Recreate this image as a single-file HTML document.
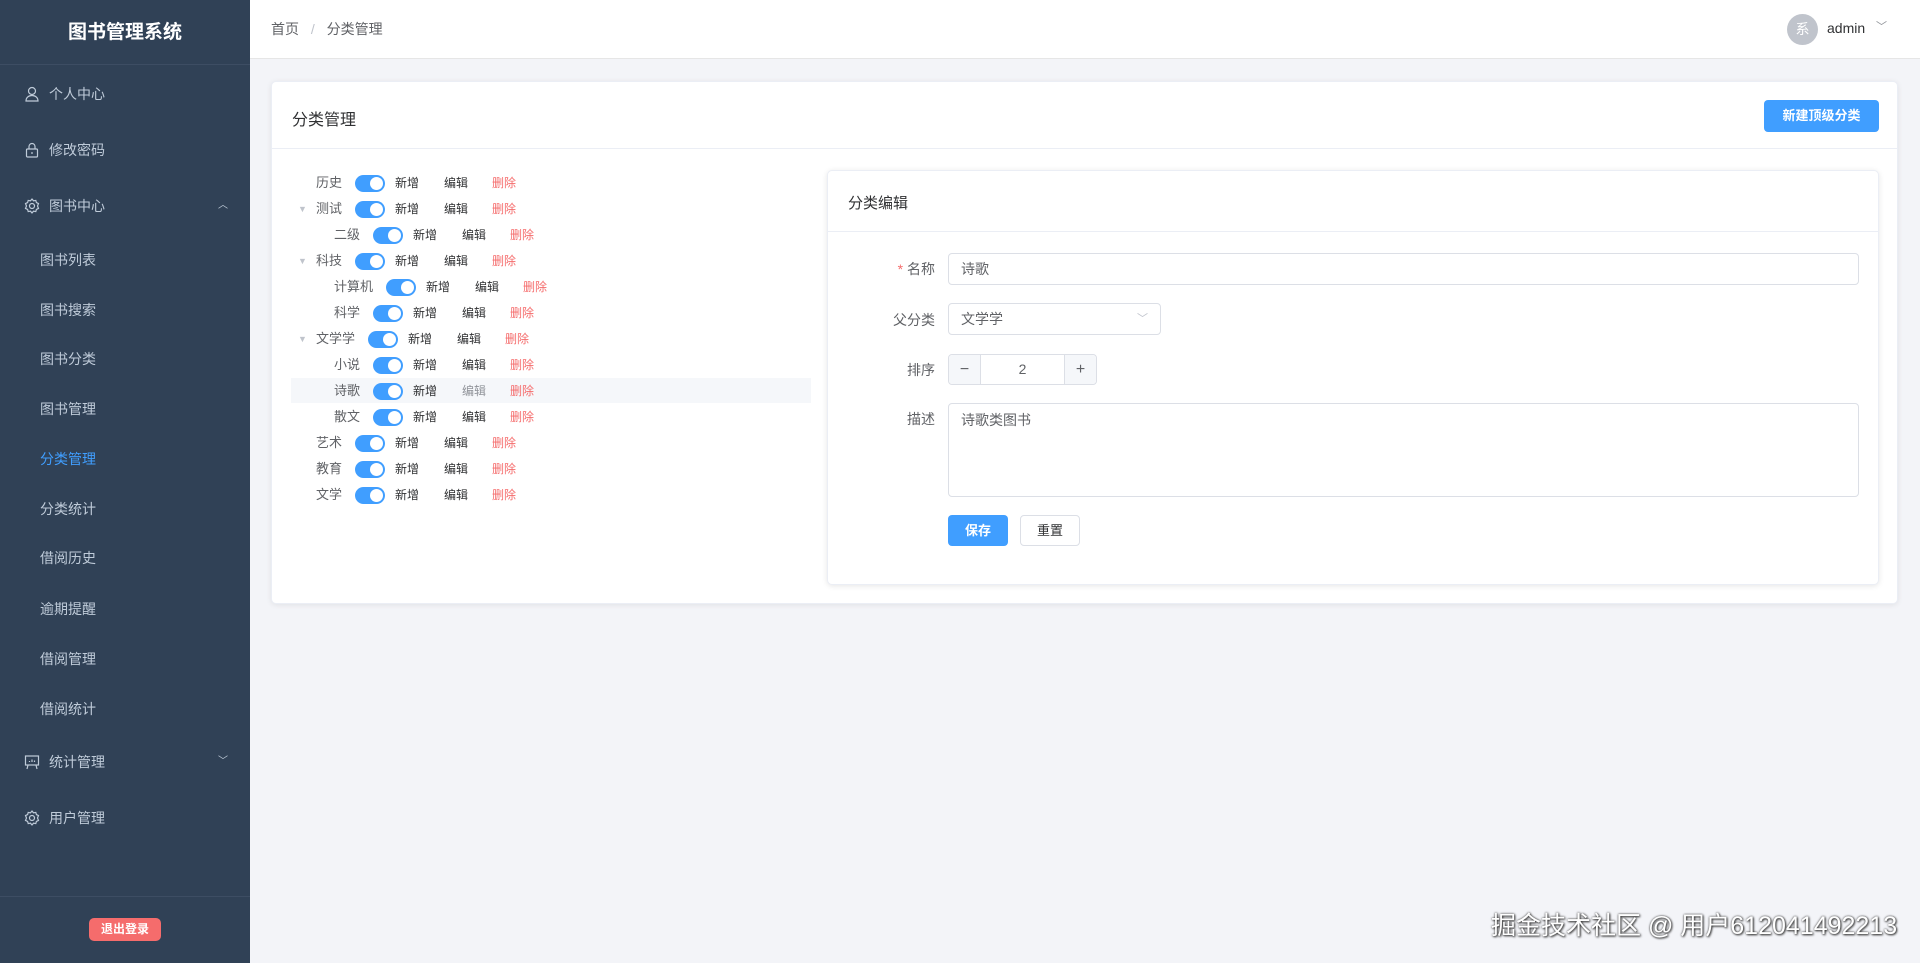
<!DOCTYPE html>
<html><head><meta charset="utf-8"><style>
*{box-sizing:border-box;margin:0;padding:0}
body{width:1920px;height:963px;overflow:hidden;background:#f3f4f8;font-family:"Liberation Sans","Noto Sans CJK SC",sans-serif;font-size:14px;color:#303133;position:relative}
.side{position:absolute;left:0;top:0;width:250px;height:963px;background:#304156;color:#bfcbd9}
.logo{height:65px;border-bottom:1px solid #3d4d63;text-align:center;line-height:66px;color:#fff;font-weight:bold;font-size:19px}
.mi{position:absolute;left:0;width:250px;height:40px;line-height:40px;font-size:14px}
.mi .ic{position:absolute;left:24px;top:12px;width:16px;height:16px}
.mi .t{position:absolute;left:49px}
.mi .ar{position:absolute;left:218px;top:0;font-size:10px}
.si{position:absolute;left:40px;font-size:14px;line-height:20px}
.logout{position:absolute;left:89px;top:918px;width:72px;height:23px;background:#f56c6c;color:#fff;border-radius:5px;text-align:center;line-height:23px;font-size:12px;font-weight:bold}
.hdr{position:absolute;left:250px;top:0;width:1670px;height:59px;background:#fff;border-bottom:1px solid #e6e6e6}
.card{position:absolute;background:#fff;border-radius:5px;box-shadow:0 1px 6px rgba(0,0,0,.08);border:1px solid #ebeef5}
.row{position:absolute;height:26px;line-height:26px;font-size:13px;color:#606266;white-space:nowrap}
.sw{display:inline-block;position:absolute;width:30px;height:17px;background:#409eff;border-radius:9px;top:5px}
.sw:after{content:"";position:absolute;right:2px;top:2px;width:13px;height:13px;border-radius:50%;background:#fff}
.a{position:absolute;font-size:12px;color:#303133}
.d{color:#f56c6c}
.inp{position:absolute;border:1px solid #dcdfe6;border-radius:4px;background:#fff;font-size:14px;color:#606266;padding-left:12px}
.lbl{position:absolute;right:0;font-size:14px;color:#606266;text-align:right}
</style></head><body>
<div class="side">
 <div class="logo">图书管理系统</div>
 <div class="mi" style="top:74px"><svg class="ic" viewBox="0 0 16 16" fill="none" stroke="#bfcbd9" stroke-width="1.2"><circle cx="8" cy="5" r="3.5"/><path d="M2 15c0-3.5 2.7-5.5 6-5.5s6 2 6 5.5z"/></svg><span class="t">个人中心</span></div>
 <div class="mi" style="top:130px"><svg class="ic" viewBox="0 0 16 16" fill="none" stroke="#bfcbd9" stroke-width="1.2"><rect x="2.5" y="7" width="11" height="8" rx="1"/><path d="M5 7V4.5a3 3 0 0 1 6 0V7M8 10v2"/></svg><span class="t">修改密码</span></div>
 <div class="mi" style="top:186px"><svg class="ic" viewBox="0 0 16 16" fill="none" stroke="#bfcbd9" stroke-width="1.2"><circle cx="8" cy="8" r="2.5"/><path d="M8 1l1.5 1.8 2.3-.4.6 2.2 2.1 1-1 2.4 1 2.4-2.1 1-.6 2.2-2.3-.4L8 15l-1.5-1.8-2.3.4-.6-2.2-2.1-1 1-2.4-1-2.4 2.1-1 .6-2.2 2.3.4z"/></svg><span class="t">图书中心</span><span class="ar">︿</span></div>
 <div class="si" style="top:250px">图书列表</div>
 <div class="si" style="top:300px">图书搜索</div>
 <div class="si" style="top:349px">图书分类</div>
 <div class="si" style="top:399px">图书管理</div>
 <div class="si" style="top:449px;color:#409eff">分类管理</div>
 <div class="si" style="top:499px">分类统计</div>
 <div class="si" style="top:548px">借阅历史</div>
 <div class="si" style="top:599px">逾期提醒</div>
 <div class="si" style="top:649px">借阅管理</div>
 <div class="si" style="top:699px">借阅统计</div>
 <div class="mi" style="top:742px"><svg class="ic" viewBox="0 0 16 16" fill="none" stroke="#bfcbd9" stroke-width="1.2"><rect x="1.5" y="2" width="13" height="9"/><path d="M4 11l-1 4M12 11l1 4M5.5 8V7M8 8V5.5M10.5 8V6.5"/></svg><span class="t">统计管理</span><span class="ar">﹀</span></div>
 <div class="mi" style="top:798px"><svg class="ic" viewBox="0 0 16 16" fill="none" stroke="#bfcbd9" stroke-width="1.2"><circle cx="8" cy="8" r="2.5"/><path d="M8 1l1.5 1.8 2.3-.4.6 2.2 2.1 1-1 2.4 1 2.4-2.1 1-.6 2.2-2.3-.4L8 15l-1.5-1.8-2.3.4-.6-2.2-2.1-1 1-2.4-1-2.4 2.1-1 .6-2.2 2.3.4z"/></svg><span class="t">用户管理</span></div>
 <div style="position:absolute;top:896px;left:0;width:250px;border-top:1px solid #3d4d63"></div>
 <div class="logout">退出登录</div>
</div>
<div class="hdr">
 <div style="position:absolute;left:21px;top:19px;font-size:14px;color:#606266">首页 <span style="color:#c0c4cc;margin:0 8px">/</span> 分类管理</div>
 <div style="position:absolute;left:1537px;top:14px;width:31px;height:31px;border-radius:50%;background:#c0c4cc;color:#fff;text-align:center;line-height:31px;font-size:14px">系</div>
 <div style="position:absolute;left:1577px;top:20px;font-size:14px;color:#303133">admin</div>
 <div style="position:absolute;left:1626px;top:18px;font-size:11px;color:#909399">﹀</div>
</div>
<div class="card" style="left:271px;top:81px;width:1627px;height:523px">
 <div style="height:67px;border-bottom:1px solid #ebeef5;position:relative">
  <div style="position:absolute;left:20px;top:24px;font-size:16px">分类管理</div>
  <div style="position:absolute;left:1492px;top:18px;width:115px;height:32px;background:#409eff;border-radius:4px;color:#fff;font-size:13px;font-weight:bold;text-align:center;line-height:32px">新建顶级分类</div>
 </div>
 <div style="position:absolute;left:19px;top:296px;width:520px;height:25px;background:#f5f7fa"></div>
 <div id="tree"></div>
 <div class="card" style="left:555px;top:88px;width:1052px;height:415px;box-shadow:0 1px 6px rgba(0,0,0,.1)">
  <div style="height:61px;border-bottom:1px solid #ebeef5;position:relative"><div style="position:absolute;left:20px;top:21px;font-size:15px">分类编辑</div></div>
  <div style="position:absolute;left:0;top:0;width:107px;height:400px">
   <div class="lbl" style="top:88px"><span style="color:#f56c6c">*</span> 名称</div>
   <div class="lbl" style="top:139px">父分类</div>
   <div class="lbl" style="top:189px">排序</div>
   <div class="lbl" style="top:238px">描述</div>
  </div>
  <div class="inp" style="left:120px;top:82px;width:911px;height:32px;line-height:30px">诗歌</div>
  <div class="inp" style="left:120px;top:132px;width:213px;height:32px;line-height:30px">文学学<span style="position:absolute;right:12px;top:0;color:#c0c4cc;font-size:11px">﹀</span></div>
  <div class="inp" style="left:120px;top:183px;width:149px;height:31px;padding:0;text-align:center;line-height:29px;color:#606266">2
   <div style="position:absolute;left:0;top:0;width:32px;height:29px;background:#f5f7fa;border-right:1px solid #dcdfe6;border-radius:4px 0 0 4px;font-size:16px">−</div>
   <div style="position:absolute;right:0;top:0;width:32px;height:29px;background:#f5f7fa;border-left:1px solid #dcdfe6;border-radius:0 4px 4px 0;font-size:16px">+</div>
  </div>
  <div class="inp" style="left:120px;top:232px;width:911px;height:94px;padding-top:6px">诗歌类图书</div>
  <div style="position:absolute;left:120px;top:344px;width:60px;height:31px;background:#409eff;border-radius:4px;color:#fff;text-align:center;line-height:31px;font-size:13px;font-weight:bold">保存</div>
  <div style="position:absolute;left:192px;top:344px;width:60px;height:31px;border:1px solid #dcdfe6;border-radius:4px;text-align:center;line-height:29px;font-size:13px">重置</div>
 </div>
</div>
<div style="position:absolute;left:1491px;top:906px;font-size:25px;color:#fff;text-shadow:0 0 2px #333,1px 1px 2px #333;white-space:nowrap">掘金技术社区 @ 用户612041492213</div>
<script>
var rows=[["历史",0,0],["测试",0,1],["二级",1,0],["科技",0,1],["计算机",1,0],["科学",1,0],["文学学",0,1],["小说",1,0],["诗歌",1,0],["散文",1,0],["艺术",0,0],["教育",0,0],["文学",0,0]];
var h="";rows.forEach(function(r,i){var y=88+i*26;var x=r[1]?62:44;var w=r[0].length*13;
if(r[2])h+='<div class="row" style="left:26px;top:'+y+'px;font-size:9px;color:#c0c4cc">▼</div>';
var sx=x+w+13;
h+='<div class="row" style="left:'+x+'px;top:'+y+'px">'+r[0]+'</div><div class="sw" style="left:'+sx+'px;top:'+(y+5)+'px"></div>'
+'<div class="row a" style="left:'+(sx+40)+'px;top:'+y+'px;color:#303133;font-size:12px">新增</div>'
+'<div class="row a" style="left:'+(sx+89)+'px;top:'+y+'px;color:'+(i==8?'#909399':'#303133')+';font-size:12px">编辑</div>'
+'<div class="row a d" style="left:'+(sx+137)+'px;top:'+y+'px;font-size:12px">删除</div>';});
document.getElementById("tree").innerHTML=h;
</script>
</body></html>
